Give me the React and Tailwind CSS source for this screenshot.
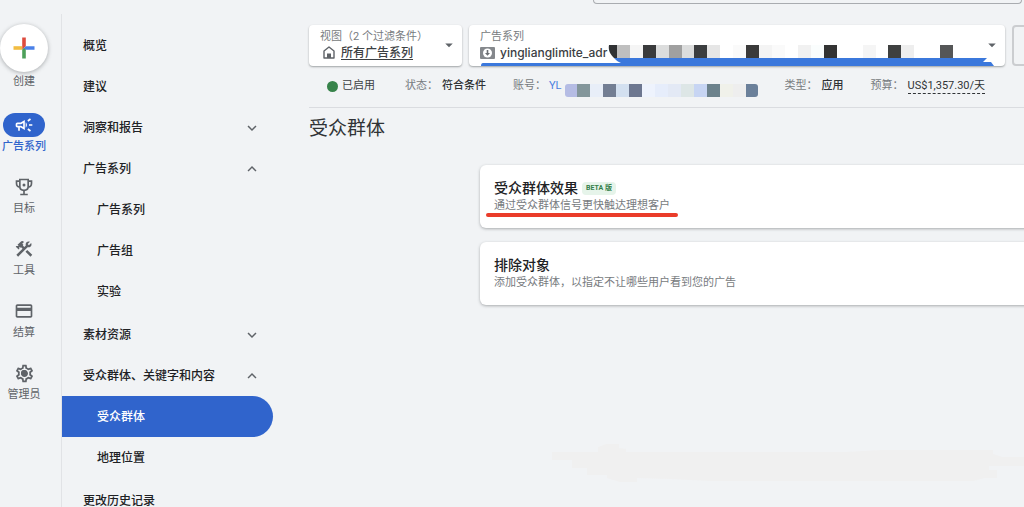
import React, { useState } from "react";
import {
    MdOutlineCampaign,
    MdConstruction,
    MdOutlineCreditCard,
    MdOutlineSettings,
    MdKeyboardArrowDown,
    MdKeyboardArrowUp,
    MdArrowDropDown,
} from "react-icons/md";

const pageStyle = "font-[Roboto,'Noto_Sans_CJK_SC',sans-serif]";
const filterStyle = 'relative h-[41px] rounded bg-white pb-0.5 pl-[11px] text-left shadow-[0_1px_2px_rgba(60,64,67,0.45)]';
const filterLabelStyle = 'block text-[11px] leading-4 text-[#777b80]';
const railLabelStyle = 'text-[11px] leading-5 whitespace-nowrap';

const TrophyIcon = () => (
    <svg width="20" height="20" viewBox="0 0 24 24" fill="none" stroke="currentColor" strokeWidth="2">
        <path d="M7 3h10v8.500c0 2.800-2.200 4.500-5 4.500s-5-1.700-5-4.500z" />
        <path d="M7 5H3v2.500C3 10 4.600 12 7 12.300M17 5h4v2.500c0 2.500-1.600 4.500-4 4.800M12 16v5M7.500 21h9" />
        <circle cx="12" cy="9.500" r="1.800" fill="currentColor" stroke="none" />
    </svg>
);

// gear with a filled hub
const AdminIcon = () => (
    <span className="relative flex items-center justify-center">
        <MdOutlineSettings size={21} />
        <span className="absolute size-1.5 rounded-full bg-current" />
    </span>
);

const PlusIcon = () => (
    <svg width="22" height="22" viewBox="0 0 22 22">
        <path d="M9.200 0.500h3.600v8.700L9.200 12.800z" fill="#dd4b3e" />
        <path d="M12.800 9.200h8.700v3.600H9.200z" fill="#4a80e8" />
        <path d="M9.200 12.800l1.800-1.800 1.800 1.800v8.700H9.200z" fill="#4da05a" />
        <path d="M0.500 9.200h8.700v3.600H0.500z" fill="#f2bd42" />
    </svg>
);

const HomeIcon = () => (
    <svg width="12" height="13" viewBox="0 0 12 13" fill="none" stroke="#5f6368" strokeWidth="1.400">
        <path d="M1 12V5L6 1l5 4v7z" strokeLinejoin="round" />
        <path d="M4 12V7.500h4V12z" fill="#5f6368" stroke="none" />
    </svg>
);

const AppIcon = () => (
    <svg width="15" height="12" viewBox="0 0 15 12">
        <rect width="15" height="12" rx="1" fill="#85888c" />
        <circle cx="7.500" cy="6" r="4.500" fill="#fff" />
        <path d="M6.700 3h1.600v3h1.700L7.500 8.800 5 6h1.700z" fill="#6b6e72" />
    </svg>
);

const railItems = [
    { label: '广告系列', icon: <MdOutlineCampaign size={20} />, active: true },
    { label: '目标', icon: <TrophyIcon /> },
    { label: '工具', icon: <MdConstruction size={20} /> },
    { label: '结算', icon: <MdOutlineCreditCard size={20} /> },
    { label: '管理员', icon: <AdminIcon /> },
];

const navSections = [
    { title: '概览' },
    { title: '建议' },
    { title: '洞察和报告', state: 'closed' },
    { title: '广告系列', state: 'open', children: ['广告系列', '广告组', '实验'] },
    { title: '素材资源', state: 'closed' },
    { title: '受众群体、关键字和内容', state: 'open', children: ['受众群体', '地理位置'] },
    { title: '更改历史记录' },
];

// masked campaign name: [x, colour]
const nameBlocks = [
    [148, '#bfbfbf'], [161, '#f5f5f5'], [174, '#3a3b3c'], [187, '#dcdddd'], [200, '#a0a0a0'],
    [213, '#dcdddd'], [225, '#3c3e40'], [238, '#e6e6e6'], [264, '#fafafa'], [277, '#3a3a3a'],
    [290, '#f4f4f4'], [303, '#fafafa'], [329, '#f1f1f1'], [342, '#fafdfd'], [355, '#333333'],
    [394, '#f5f5f5'], [419, '#3e4040'], [432, '#eeeeee'], [471, '#555657'],
];

// masked account number, every block is 13 wide
const accountBlocks = [
    '#b5bce4', '#83969b', '#e8eef8', '#737e93', '#d3e0f0', '#6d7790', '#eef3fd', '#e6edfb',
    '#e3e9f5', '#dde6e6', '#c7d5f3', '#6c828c', '#f0f1ea', '#eeeeee', '#6b809a',
];

const NameMask = () => (
    <svg className="absolute left-0 top-0" width="530" height="41" viewBox="0 0 530 41">
        <path d="M140 20h8v13h-3c-4-4-6-8-5-13z" fill="#303234" />
        {nameBlocks.map(([x, color]) => <rect key={x} x={x} y="20" width="13" height="13" fill={color} />)}
        <path d="M14 38H152C149 37 147 35 145 33H518L514 37H522L525 41H12Q12 38 14 38z" fill="#3b78dc" />
    </svg>
);

const AccountMask = () => (
    <svg width="193" height="20" viewBox="0 0 193 20">
        <clipPath id="account-shape"><rect y="7" width="193" height="13" rx="3" /></clipPath>
        <g clipPath="url(#account-shape)">
            {accountBlocks.map((color, i) => <rect key={i} x={i * 13 - 1} y="7" width="13" height="13" fill={color} />)}
        </g>
    </svg>
);

const Rail = () => (
    <nav className="w-[62px] shrink-0 border-r border-[#e1e3e6] pt-2.5">
        <div className="flex w-12 flex-col items-center gap-[18px] text-[#5f6368]">
            <button className="mb-[3px] flex flex-col items-center">
                <span className="flex size-12 items-center justify-center rounded-full bg-white shadow-[0_1px_4px_rgba(60,64,67,0.4)]">
                    <PlusIcon />
                </span>
                <span className={railLabelStyle}>创建</span>
            </button>
            {railItems.map((item) => (
                <a key={item.label} href="#" className={`flex flex-col items-center ${item.active ? 'text-[#3064cc]' : ''}`}>
                    <span className={`flex h-6 w-[42px] items-center justify-center rounded-full ${item.active ? 'bg-[#3064cc] text-white' : ''}`}>
                        {item.icon}
                    </span>
                    <span className={`${railLabelStyle} ${item.active ? 'font-medium' : ''}`}>{item.label}</span>
                </a>
            ))}
        </div>
    </nav>
);

const SideNav = ({ current, onSelect }) => (
    <nav className="w-[211px] shrink-0 pt-[11px] text-xs font-medium text-[#202124]">
        {navSections.map((section) => (
            <div key={section.title} className={section.children ? 'pb-0.5' : ''}>
                <button className="flex h-[41px] w-full items-center justify-between pl-[21px] pr-3">
                    {section.title}
                    {section.state === 'closed' && <MdKeyboardArrowDown size={18} className="text-[#5f6368]" />}
                    {section.state === 'open' && <MdKeyboardArrowUp size={18} className="text-[#5f6368]" />}
                </button>
                {section.children?.map((child) => {
                    const id = `${section.title}/${child}`;
                    return (
                        <a
                            key={id}
                            href="#"
                            onClick={() => onSelect(id)}
                            className={`flex h-[41px] items-center rounded-r-full pl-[35px] ${id === current ? 'bg-[#3064cc] text-white' : ''}`}
                        >
                            {child}
                        </a>
                    );
                })}
            </div>
        ))}
    </nav>
);

const Filters = () => (
    <div className="-mr-8 flex gap-[7px]">
        <button className={`${filterStyle} flex w-[153px] items-center justify-between pr-1`}>
            <span>
                <span className={filterLabelStyle}>视图（2 个过滤条件）</span>
                <span className="flex items-center gap-1.5 pl-[3px] text-xs leading-4 font-medium text-[#3c4043]">
                    <HomeIcon />
                    <span className="underline underline-offset-2">所有广告系列</span>
                </span>
            </span>
            <MdArrowDropDown size={18} className="shrink-0 text-[#5f6368]" />
        </button>
        <button className={`${filterStyle} flex flex-1 items-center justify-between pr-1`}>
            <span>
                <span className={filterLabelStyle}>广告系列</span>
                <span className="flex items-center gap-[5px] font-[Inter,sans-serif] text-xs leading-4 font-medium text-[#3c4043]">
                    <AppIcon />
                    yinglianglimite_adr
                </span>
            </span>
            <MdArrowDropDown size={18} className="shrink-0 text-[#5f6368]" />
            <NameMask />
        </button>
        <button aria-label="更多" className="h-[41px] w-11 rounded border-2 border-[#cbcdd0]" />
    </div>
);

const StatusRow = () => (
    <div className="flex h-[42px] items-center gap-[27px] border-b border-[#dadce0] pl-[18px] text-[11px] whitespace-nowrap text-[#777b80]">
        <span className="mr-[3px] flex items-center gap-1 text-[#3c4043]">
            <span className="size-[11px] rounded-full bg-[#37834a]" />
            已启用
        </span>
        <span className="flex gap-1">状态：<b className="font-medium text-[#303336]">符合条件</b></span>
        <span className="flex items-center gap-[3px]">
            账号：
            <a href="#" className="text-[#4a7fe0]">YL</a>
            <AccountMask />
        </span>
        <span className="flex gap-1">类型：<b className="font-medium text-[#303336]">应用</b></span>
        <span className="flex items-center gap-1">
            预算：
            <button className="border-b border-dashed border-[#303336] leading-[14px] text-[#303336]">US$1,357.30/天</button>
        </span>
    </div>
);

const AudienceCard = ({ title, badge, text, marked }) => (
    <section className="relative rounded-md bg-white px-[14px] pt-[13px] pb-[14px] shadow-[0_1px_3px_rgba(60,64,67,0.4)]">
        <div className="flex items-center gap-1">
            <h2 className="text-sm leading-5 font-medium text-[#202124]">{title}</h2>
            {badge && <span className="rounded-sm bg-[#e6f4ea] px-1 text-[7px] leading-[13px] font-bold text-[#35804a]">{badge}</span>}
        </div>
        <p className="text-[11px] leading-4 text-[#777b80]">{text}</p>
        {/* red marker line under the description */}
        {marked && <span className="absolute bottom-[11px] left-1.5 h-1 w-48 rounded-full bg-[#ea3c2a]" />}
    </section>
);

const App = () => {
    const [current, setCurrent] = useState('受众群体、关键字和内容/受众群体');

    return (
        <div className={`${pageStyle} flex h-screen flex-col overflow-hidden bg-[#f1f3f5]`}>
            <header className="flex h-[14px] shrink-0 items-start justify-end pr-0.5">
                <input aria-label="搜索" className="h-1 w-[42%] rounded-b border border-t-0 border-[#a9acb0]" />
            </header>
            <div className="flex min-h-0 flex-1">
                <Rail />
                <SideNav current={current} onSelect={setCurrent} />
                <main className="relative min-w-0 flex-1 overflow-hidden pt-[11px] pl-9">
                    <Filters />
                    <StatusRow />
                    <h1 className="pt-[7px] text-[19px] leading-7 text-[#303336]">受众群体</h1>
                    <div className="-mr-3 ml-[171px] flex flex-col gap-[14px] pt-[22px]">
                        <AudienceCard title="受众群体效果" badge="BETA 版" text="通过受众群体信号更快触达理想客户" marked />
                        <AudienceCard title="排除对象" text="添加受众群体，以指定不让哪些用户看到您的广告" />
                    </div>
                    <svg className="absolute right-0 bottom-[23px]" width="472" height="40" viewBox="0 0 472 40">
                        <path
                            d="M0 8h46V3l8-3h13v4l7 1v3h220l35-2h112v4l9 3h22v9h-35v4h8v8h-13l-10 3H159l-40-2-34-1v4H68l-13-4v-3H35v-7H20v-8H0z"
                            fill="#f0f0f0"
                        />
                    </svg>
                </main>
            </div>
        </div>
    );
};

export default App;
